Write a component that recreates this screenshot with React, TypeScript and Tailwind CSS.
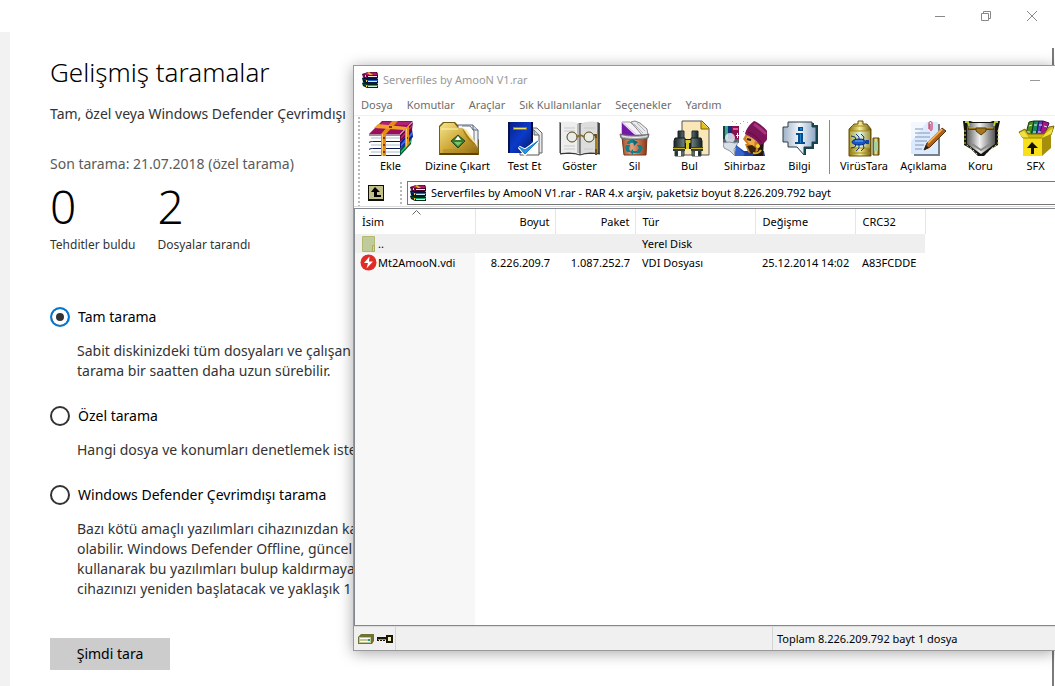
import type { ReactNode } from 'react';

const scanOptions = [
  {
    id: 'full',
    label: 'Tam tarama',
    lines: ['Sabit diskinizdeki tüm dosyaları ve çalışan', 'tarama bir saatten daha uzun sürebilir.'],
  },
  {
    id: 'custom',
    label: 'Özel tarama',
    lines: ['Hangi dosya ve konumları denetlemek istediğinizi'],
  },
  {
    id: 'offline',
    label: 'Windows Defender Çevrimdışı tarama',
    lines: [
      'Bazı kötü amaçlı yazılımları cihazınızdan kaldırmak',
      'olabilir. Windows Defender Offline, güncel',
      'kullanarak bu yazılımları bulup kaldırmaya',
      'cihazınızı yeniden başlatacak ve yaklaşık 1',
    ],
  },
];

const menuItems = ['Dosya', 'Komutlar', 'Araçlar', 'Sık Kullanılanlar', 'Seçenekler', 'Yardım'];

function BooksIcon() {
  return (
    <svg width="17" height="17" viewBox="0 0 17 17" className="shrink-0">
      <path d="M0 11 2 10h12l2 2v4l-11 0-4-2z" fill="#03251a" />
      <path d="m1 12 4 1h11v1H5z" fill="#12a86c" />
      <path d="M6 14h9v1H6z" fill="#c9f5de" />
      <path d="M0 6 2 5h12l2 2v4H4l-3-1z" fill="#03153c" />
      <path d="m1 7 4 1h11v1H5z" fill="#1d62d6" />
      <path d="M6 9h9v1H6z" fill="#cdeaff" />
      <path d="M0 2 6 0l9 0 1 2v4l-11 0-4-1z" fill="#40051f" />
      <path d="m1 2 5-1.500h8l2 2.500-10 .5z" fill="#b5156e" />
      <path d="M6 4h9v1H6z" fill="#fbe0ee" />
      <path d="M1 3l4 1.500V6L1 4.500z" fill="#93105a" />
      <path d="m7 0 4 3h-3L5 1z" fill="#e9b41c" />
      <path d="M3 3h1v2H3zM4 8h1v2H4zM4 13h1v2H4z" fill="#f3cf20" />
    </svg>
  );
}

function IconFrame({ children }: { children: ReactNode }) {
  return (
    <svg width="44" height="37" viewBox="0 0 44 37" className="block">
      {children}
    </svg>
  );
}

function AddIcon() {
  return (
    <IconFrame>
      <path d="M31 29 43 16l-1 8-11 12z" fill="#06563a" />
      <path d="m32 31 10-11v2L32 33z" fill="#20c877" />
      <path d="M31 22 43 9l1 8-13 12z" fill="#0a1f86" />
      <path d="m32 24 11-12v3L32 27z" fill="#3d66ee" />
      <path d="M31 15 44 2l-1 8-12 12z" fill="#6d0840" />
      <path d="m32 17 11-12v2L32 19z" fill="#c02580" />
      <path d="M1 15h30v21H1l1-3-2-3 2-4-2-3 2-4z" fill="#fff" />
      <path d="M2 18h29M2 25h29M2 32h29" stroke="#d7dce4" strokeWidth="2" />
      <path d="M0 15h31" stroke="#5d0637" />
      <path d="M0 22.500c1-1 3-1 5-1h26" fill="none" stroke="#0a1a55" />
      <path d="M0 29.500c1-1 3-1 5-1h26" fill="none" stroke="#0a1a55" />
      <path d="M0 35.500h31" stroke="#07301f" />
      <path d="M13 1h31L31 14H0z" fill="#980d5c" />
      <path d="M14 2h28l-3 3H10z" fill="#b32176" />
      <path d="m23 1 6 0-12 13h-5z" fill="#e58b16" />
      <path d="m9 4 29 3-3 3-30-2z" fill="#f0a02b" />
      <path d="M12 14h5v22h-5zM36 9l4-4v19l-4 5z" fill="#e58b16" />
      <path d="M13 14h1v22h-1zM37 9l1-1v18l-1 1z" fill="#ffc65c" />
      <path d="M14 17h2v2h-2zM14 24h2v2h-2zM14 31h2v2h-2zM20 6h3v2h-3zM38 17h1v2h-1z" fill="#7b3b00" />
    </IconFrame>
  );
}

function ExtractIcon() {
  return (
    <IconFrame>
      <defs>
        <linearGradient id="folder" x1="0" y1="0" x2="1" y2="1">
          <stop offset="0" stopColor="#f4e58c" />
          <stop offset="0.500" stopColor="#cfa93a" />
          <stop offset="1" stopColor="#8f6a10" />
        </linearGradient>
      </defs>
      <path d="M3 6 7 2h12l4 4h8l12 14v15H3z" fill="#7a5c0c" />
      <path d="M22 5h15l5 5v20L22 12z" fill="#eef1f6" stroke="#5b6475" />
      <path d="M26 6h8l4 5v14" fill="#fff" stroke="#6b7486" />
      <path d="M37 5v5h5" fill="#cfd5e0" stroke="#5b6475" />
      <path d="M4 7 8 3h10l4 5h4c3 9 9 15 16 20v6H4z" fill="url(#folder)" />
      <path d="M26 8c3 9 8 15 16 20L32 13z" fill="#a67a12" />
      <path d="M27 8c4 7 8 12 15 18L31 10z" fill="#f7e7a0" />
      <path d="M5 9h17" stroke="#fff3ad" />
      <path d="M4 34h38" stroke="#5c4207" strokeWidth="2" />
      <path d="M7 30h20M7 32h26" stroke="#b08a26" />
      <path d="m22 15 7 6-7 7-7-7z" fill="#397a31" stroke="#244d1e" />
      <path d="m22 16 3 4h-6z" fill="#fff" />
      <path d="m22 26-4-4h8z" fill="#7fc46c" />
    </IconFrame>
  );
}

function TestIcon() {
  return (
    <IconFrame>
      <defs>
        <linearGradient id="testBook" x1="0" y1="0" x2="1" y2="1">
          <stop offset="0" stopColor="#0a1f80" />
          <stop offset="0.500" stopColor="#0b3bcb" />
          <stop offset="1" stopColor="#06155c" />
        </linearGradient>
      </defs>
      <path d="M27 8h7l5 5v20H27z" fill="#e8eaee" stroke="#666" />
      <path d="M20 10h11l5 5v20H17V18z" fill="#fff" stroke="#555" />
      <path d="M31 10v5h5" fill="#ccc" stroke="#666" />
      <path d="M5 2h25v20L19 33H5z" fill="url(#testBook)" />
      <path d="M5 2h2v31H5z" fill="#06124e" />
      <path d="M28 2h2v19h-2z" fill="#020a36" />
      <path d="M10 7h14v3H10z" fill="#8a7c13" />
      <path d="M11 8h12v1H11z" fill="#f2e45c" />
      <path d="m16 27 6 7 13-13-13 9z" fill="#2795e8" stroke="#fff" strokeWidth="3" />
      <path d="m16 27 6 7 13-13-13 9z" fill="#2795e8" stroke="#147cd1" />
    </IconFrame>
  );
}

function ViewIcon() {
  return (
    <IconFrame>
      <path d="M2 3h40v31H2z" fill="#555" />
      <path d="M3 2c7-1 14-1 19 2v31c-5-3-12-3-19-2z" fill="#eee" />
      <path d="M22 4c5-3 12-3 18-2v31c-6-1-13-1-18 2z" fill="#ddd" />
      <path d="M19 4h3v29h-3z" fill="#bbb" />
      <path d="M22 4v31M2 2v31M40 2v31" stroke="#333" />
      <path d="M2 34c8-1 14-1 20 1 6-2 12-2 20-1" fill="none" stroke="#333" />
      <path d="M6 8h11M6 11h11M6 26h11M6 29h11M26 8h11M26 29h9" stroke="#c8c8c8" />
      <circle cx="14" cy="17" r="5" fill="#e9ede8" stroke="#554217" />
      <circle cx="31" cy="17" r="5" fill="#e9ede8" stroke="#554217" />
      <path d="M19 17c2-2 5-2 7 0" fill="none" stroke="#876d23" strokeWidth="2" />
      <path d="M36 15h2v20" fill="none" stroke="#6e5010" strokeWidth="2" />
      <path d="M38 18v11" stroke="#d4ad37" />
    </IconFrame>
  );
}

function DeleteIcon() {
  return (
    <IconFrame>
      <defs>
        <linearGradient id="bin" x1="0" y1="0" x2="1" y2="0">
          <stop offset="0" stopColor="#a4502d" />
          <stop offset="0.400" stopColor="#e5a17e" />
          <stop offset="1" stopColor="#8a3717" />
        </linearGradient>
      </defs>
      <path d="M9 2h8l15 13H9z" fill="#f6f0fa" stroke="#999" />
      <path d="M9 3 23 16H9z" fill="#7318a8" />
      <path d="m9 2 15 13" stroke="#d9b8ee" />
      <path d="m18 2 4-1 5 2 7 6 1 6H29z" fill="#e9eaef" stroke="#888" />
      <path d="m21 4 9 9M24 3l8 8" stroke="#b5b5ba" />
      <path d="M9 17h25l-1 18H11z" fill="url(#bin)" stroke="#793113" />
      <path d="M7 14c5 2 25 2 29 0l-1 4c-5 2-22 2-27 0z" fill="#ababab" stroke="#666" />
      <path d="M9 16c8 2 18 2 25 0" fill="none" stroke="#eee" />
      <path d="M15 24c1-3 5-4 8-1" fill="none" stroke="#147f87" strokeWidth="3" />
      <path d="m20 20 1 6 4-4z" fill="#0d6a72" />
      <path d="m13 25 4 0-1 4 2 3h-4c-2-2-2-5-1-7z" fill="#147f87" />
      <path d="m20 29 0 6-3-3zM20 31h4l2-3-2-3h4l2 3-3 5h-7z" fill="#147f87" />
    </IconFrame>
  );
}

function FindIcon() {
  return (
    <IconFrame>
      <defs>
        <linearGradient id="tube" x1="0" y1="0" x2="1" y2="0">
          <stop offset="0" stopColor="#172326" />
          <stop offset="0.500" stopColor="#8fa1a0" />
          <stop offset="1" stopColor="#142022" />
        </linearGradient>
      </defs>
      <path d="M14 1h20l7 7v27H14z" fill="#f9e7b9" stroke="#555" />
      <path d="M33 1v8h8" fill="#e5c117" stroke="#7d6510" />
      <path d="M15 19h9v10h-9z" fill="#151c1e" />
      <path d="M16 20h7v3h-7zM18 23h3v6h-3z" fill="#d5cb24" />
      <path d="M10 11h6v8h-6zM24 11h6v8h-6z" fill="url(#tube)" stroke="#20282a" />
      <path d="M7 18h10v10H6V21zM23 18h10l1 3v7H23z" fill="url(#tube)" stroke="#151c1e" />
      <path d="M5 27h12v4H5zM23 27h12v4H23z" fill="#303a3c" />
      <path d="M5 28h12v1H5zM23 28h12v1H23z" fill="#c9b41d" />
      <path d="M7 31h9v5H7zM24 31h9v5h-9z" fill="url(#tube)" stroke="#444" />
      <path d="M10 31h3v5h-3zM27 31h3v5h-3z" fill="#fff" />
    </IconFrame>
  );
}

function WizardIcon() {
  return (
    <IconFrame>
      <path d="M0 6h3v15H0z" fill="#14443f" />
      <path d="M2 6h3v15H2z" fill="#3da98b" />
      <path d="M5 6h4v15H5z" fill="#10307a" />
      <path d="M9 6h7v16H9z" fill="#86114f" />
      <path d="M10 8h5v2h-5z" fill="#e35ca0" />
      <path d="M0 19h16v4H0z" fill="#59616b" />
      <circle cx="7" cy="18" r="5" fill="#eef4fa" opacity="0.800" />
      <path d="m0 23 6-1 6 1 3-1-2 5-2 2 1 7-5-5-6-3z" fill="#d9dfe6" stroke="#8e98a4" />
      <path d="m12 36 1-11 8 6 20 0 1 5z" fill="#1c3f9f" />
      <path d="m13 25 9 9-2 2h-8z" fill="#3763cf" />
      <path d="M35 20h6l-1 16H30z" fill="#20180f" />
      <path d="m23 14 13 9-1 8-6 3-4-2-3-8h2l-4-5z" fill="#c98124" />
      <path d="m24 16 8 4-1 6-5-2-3-5z" fill="#efad4c" />
      <path d="m24 19 4 1" stroke="#2e1a08" strokeWidth="2" />
      <path d="m24 26 5-1 4 3-1 6-4 0z" fill="#38220c" />
      <circle cx="35" cy="26" r="2" fill="#f2d32e" />
      <path d="M30 33c4 1 7-1 8-3" fill="none" stroke="#d7ad26" strokeWidth="2" />
      <path d="M31 1c4 1 14 9 15 13-1 5-4 10-9 11-4-5-9-8-15-11 1-5 5-10 9-13z" fill="#7d1457" />
      <path d="M31 4c4 3 9 7 12 10" fill="none" stroke="#a83480" strokeWidth="3" />
      <path d="M25 12c5 2 9 5 13 10" fill="none" stroke="#5d0b40" />
      <path d="M9 1h1v1H9zM17 3h1v1h-1zM20 1h1v1h-1zM20 11h1v1h-1zM13 3h1v1h-1zM24 2h1v1h-1z" fill="#aaa" />
      <path d="M13 15h1v-2h1v2h2v1h-2v2h-1v-2h-1z" fill="#fff" />
    </IconFrame>
  );
}

function InfoIcon() {
  return (
    <IconFrame>
      <defs>
        <linearGradient id="bubble" x1="0" y1="0" x2="1" y2="0">
          <stop offset="0" stopColor="#9fb2c8" />
          <stop offset="0.500" stopColor="#f4f8fc" />
          <stop offset="1" stopColor="#8ba5c2" />
        </linearGradient>
      </defs>
      <path d="M10 2h24v5h4v15h-4v5h-8v8l-7-8h-9v-5H5V7h5z" fill="url(#bubble)" stroke="#2c3e48" />
      <path d="M35 3v3h4v17h-4v5h-8v7" fill="none" stroke="#16444e" strokeWidth="2" />
      <path d="M20 7h5v4h-5zM18 13h7v9h2v2H17v-2h3v-7h-2z" fill="#084c8b" />
      <path d="M22 8h2v2h-2zM22 14h1v9h-1z" fill="#1f85c8" />
    </IconFrame>
  );
}

function VirusIcon() {
  return (
    <IconFrame>
      <defs>
        <linearGradient id="jar" x1="0" y1="0" x2="1" y2="0">
          <stop offset="0" stopColor="#877009" />
          <stop offset="0.500" stopColor="#f7ee9c" />
          <stop offset="1" stopColor="#6a5505" />
        </linearGradient>
        <linearGradient id="glass" x1="0" y1="0" x2="1" y2="0">
          <stop offset="0" stopColor="#b5a940" />
          <stop offset="0.500" stopColor="#dff6ee" />
          <stop offset="1" stopColor="#a3963a" />
        </linearGradient>
      </defs>
      <path d="M16 1h5v3h4l4 5v27H7V9l5-5h4z" fill="url(#jar)" stroke="#695308" />
      <path d="M8 11h20v17H8z" fill="url(#glass)" />
      <path d="M10 6h14M8 11h20M8 28h20M8 33h20" stroke="#a58c12" />
      <path d="M31 18h6v17h-6z" fill="url(#jar)" stroke="#584706" />
      <path d="M32 22h4v9h-4z" fill="#a4cfa2" />
      <path d="m14 14 3 3v4M19 14l3 3-1 4M9 16l4 1 1 3M14 31l3-3v-4M19 31l3-3-1-4M9 28l4-1 1-3" fill="none" stroke="#143b70" />
      <ellipse cx="17" cy="22" rx="7" ry="3" fill="#1759c8" stroke="#092c78" />
      <path d="M24 20h3v4h-3z" fill="#16449e" />
      <path d="M13 21h8" stroke="#70b4ff" />
    </IconFrame>
  );
}

function CommentIcon() {
  return (
    <IconFrame>
      <path d="M10 4h28v32H12z" fill="#77818e" />
      <path d="M9 2h27v32H9z" fill="#dceaff" />
      <path d="M9 2h16L9 22z" fill="#f3f8ff" />
      <path d="M13 9h8M13 13h15M13 17h15M13 21h12M13 25h9M13 29h7" stroke="#8496b3" />
      <path d="M27 9V3c0-2 3-2 3 0v6c0 2-2 2-2 0V4" fill="none" stroke="#c91c46" />
      <path d="m22 30 3-7 15-15 4 3-16 16z" fill="#b35f16" stroke="#50300b" />
      <path d="m26 23 14-14" stroke="#f5b24b" strokeWidth="2" />
      <path d="m22 30 2-5 3 3z" fill="#2e2011" />
    </IconFrame>
  );
}

function ProtectIcon() {
  return (
    <IconFrame>
      <defs>
        <linearGradient id="shield" x1="0" y1="0" x2="1" y2="0">
          <stop offset="0" stopColor="#5c5c5c" />
          <stop offset="0.450" stopColor="#f1f1f1" />
          <stop offset="1" stopColor="#555" />
        </linearGradient>
      </defs>
      <path d="M4 1h7l3 1h17l3-1h7l-2 9v15l-7 4-7 7h-6l-7-7-7-4V10z" fill="#151510" />
      <path d="M10 3h25l1 4v17L22 34 8 24V7z" fill="url(#shield)" />
      <path d="M6 10v14l6 4 7 7M39 10v14l-6 4-7 7" fill="none" stroke="#d8ce55" strokeDasharray="2 2" />
      <path d="M6 2h3l1 4M39 2h-3l-1 4" fill="none" stroke="#b4c934" strokeWidth="2" />
      <path d="M9 9h26" stroke="#5d3d08" strokeWidth="2" />
      <path d="M10 8h24" stroke="#d2a32c" />
      <path d="M17 8h10v3l-5 4-5-4z" fill="#a6771a" stroke="#57400d" />
      <path d="m13 24 9 6 9-6" fill="none" stroke="#8a8a8a" strokeWidth="2" />
    </IconFrame>
  );
}

function SfxIcon() {
  return (
    <IconFrame>
      <path d="m15 2 5-1-3 16h-6z" fill="#4f8c1e" stroke="#123a14" />
      <path d="m20 1 5 0-3 16h-5z" fill="#138a5c" stroke="#093c24" />
      <path d="m25 1 4 0-3 16h-4z" fill="#5a3fc4" stroke="#20145e" />
      <path d="m29 1 6 2-5 14h-5z" fill="#a3188f" stroke="#4b0844" />
      <path d="m15 6 3-1M20 5l3 0M25 5l3 0M30 6l3 1M13 12h3M19 12h3M24 12h3" stroke="#f3e9f3" />
      <path d="m9 18-4-6 6-3 3 5h16l5-7 5-1-3 9-9 6z" fill="#cfb80f" stroke="#7c6b08" />
      <path d="m9 18-4-5 5-2 5 7zM28 18l4-5 7-5-2 7z" fill="#efe044" />
      <path d="m28 18 9-4v14l-9 8z" fill="#a58f0b" />
      <path d="M9 18h19v18H9z" fill="#f7df1a" />
      <path d="M9 18h19" stroke="#9c8709" />
      <path d="m18 22 6 6h-4v6h-3v-6h-4z" fill="#111" />
    </IconFrame>
  );
}

const archiveTools = [
  { label: 'Ekle', icon: <AddIcon /> },
  { label: 'Dizine Çıkart', icon: <ExtractIcon />, wide: true },
  { label: 'Test Et', icon: <TestIcon /> },
  { label: 'Göster', icon: <ViewIcon /> },
  { label: 'Sil', icon: <DeleteIcon /> },
  { label: 'Bul', icon: <FindIcon /> },
  { label: 'Sihirbaz', icon: <WizardIcon /> },
  { label: 'Bilgi', icon: <InfoIcon /> },
];

function ToolButton({ label, icon, width }: { label: string; icon: ReactNode; width: string }) {
  return (
    <button type="button" className={`flex shrink-0 flex-col items-center whitespace-nowrap ${width}`}>
      {icon}
      <span className="leading-[18px]">{label}</span>
    </button>
  );
}

function Grip() {
  return (
    <svg width="3" className="h-full shrink-0" aria-hidden="true">
      <line x1="1" y1="1" x2="1" y2="100%" stroke="#b9b9b9" strokeWidth="2" strokeDasharray="2 2" />
    </svg>
  );
}

function DefenderPage() {
  return (
    <div className="flex min-h-screen flex-col">
      <header className="flex h-8 justify-end text-[#888]">
        <button type="button" aria-label="Simge durumuna küçült" className="grid w-[46px] place-items-center">
          <svg width="10" height="10" stroke="currentColor"><path d="M0 5.500h10" /></svg>
        </button>
        <button type="button" aria-label="Önceki boyut" className="grid w-[46px] place-items-center">
          <svg width="10" height="10" fill="none" stroke="currentColor"><path d="M.5 2.500h7v7h-7zM2.500 2.500v-2h7v7h-2" /></svg>
        </button>
        <button type="button" aria-label="Kapat" className="grid w-[46px] place-items-center">
          <svg width="10" height="10" stroke="currentColor"><path d="m0 0 10 10M10 0 0 10" /></svg>
        </button>
      </header>
      <div className="flex grow">
        <aside className="w-[10px] bg-[#f2f2f2]" />
        <main className="grow whitespace-nowrap pl-10 pt-[22px] text-[14px] leading-5 text-[#333]">
          <h1 className="text-[26px] font-light leading-9 text-black">Gelişmiş taramalar</h1>
          <p className="mt-[14px]">Tam, özel veya Windows Defender Çevrimdışı</p>
          <p className="mt-[30px] text-[#5a5a5a]">Son tarama: 21.07.2018 (özel tarama)</p>
          <dl className="mt-2 flex gap-[22px]">
            <div className="flex flex-col-reverse">
              <dt className="mt-[5px] text-[12px]">Tehditler buldu</dt>
              <dd className="text-[46px] font-light leading-[48px] text-black">0</dd>
            </div>
            <div className="flex flex-col-reverse">
              <dt className="mt-[5px] text-[12px]">Dosyalar tarandı</dt>
              <dd className="text-[46px] font-light leading-[48px] text-black">2</dd>
            </div>
          </dl>
          <form className="mt-[52px]">
            <div className="flex flex-col gap-[25px]">
              {scanOptions.map((option, i) => (
                <div key={option.id}>
                  <div className="flex items-center gap-2 text-black">
                    <input
                      type="radio"
                      name="scan"
                      id={option.id}
                      defaultChecked={i === 0}
                      className="size-5 appearance-none rounded-full border-2 border-[#333] checked:border-[#0078d7] checked:bg-[#333] checked:shadow-[inset_0_0_0_4px_white]"
                    />
                    <label htmlFor={option.id}>{option.label}</label>
                  </div>
                  <p className="mt-[14px] pl-[27px]">
                    {option.lines.map((line) => (
                      <span key={line} className="block">{line}</span>
                    ))}
                  </p>
                </div>
              ))}
            </div>
            <button type="button" className="mt-[39px] h-8 w-[120px] bg-[#ccc] text-black">Şimdi tara</button>
          </form>
        </main>
        <div className="mr-px mt-4 w-0.5 bg-[#7a7a7a]" />
      </div>
    </div>
  );
}

function FileTable() {
  const head = 'border-r border-[#e5e5e5] pl-[7px] pr-[5px] font-normal';
  const cell = 'pl-[7px] pr-[5px]';
  return (
    <table className="h-full w-[570px] table-fixed border-collapse whitespace-nowrap text-left leading-[18px]">
      <colgroup>
        <col className="w-[120px]" />
        <col className="w-20" />
        <col className="w-20" />
        <col className="w-[120px]" />
        <col className="w-[100px]" />
        <col className="w-[70px]" />
      </colgroup>
      <thead>
        <tr className="h-[25px]">
          <th className={`${head} relative`}>
            İsim
            <svg width="9" height="5" viewBox="0 0 9 5" className="absolute left-[57px] top-px" fill="none" stroke="#666">
              <path d="m.5 4.500 4-4 4 4" />
            </svg>
          </th>
          <th className={`${head} text-right`}>Boyut</th>
          <th className={`${head} text-right`}>Paket</th>
          <th className={head}>Tür</th>
          <th className={head}>Değişme</th>
          <th className={head}>CRC32</th>
        </tr>
      </thead>
      <tbody>
        <tr className="h-[19px] bg-[#efefef]">
          <td className="pl-[7px]">
            <span className="flex items-center gap-[3px]">
              <svg width="13" height="16" viewBox="0 0 13 16">
                <path d="M.5.500h12v15H.5z" fill="#bfcb9a" stroke="#b3ba70" />
                <path d="M10.500 9.500h2v6h-2z" fill="#d3d79b" stroke="#a9ad5a" />
              </svg>
              ..
            </span>
          </td>
          <td />
          <td />
          <td className={cell}>Yerel Disk</td>
          <td />
          <td />
        </tr>
        <tr className="h-[19px]">
          <td className="bg-[#f7f7f7] pl-[5px]">
            <span className="flex items-center gap-px">
              <svg width="17" height="17" viewBox="0 0 17 17">
                <circle cx="8.500" cy="8.500" r="8" fill="#df2c26" />
                <path d="M9.500 2.500 4 9h4l-1.500 5.500L13 7.500H9z" fill="#fff" />
              </svg>
              Mt2AmooN.vdi
            </span>
          </td>
          <td className={`${cell} text-right`}>8.226.209.7</td>
          <td className={`${cell} text-right`}>1.087.252.7</td>
          <td className={cell}>VDI Dosyası</td>
          <td className={cell}>25.12.2014 14:02</td>
          <td className={cell}>A83FCDDE</td>
        </tr>
        <tr>
          <td className="bg-[#f7f7f7]" />
          <td colSpan={5} />
        </tr>
      </tbody>
    </table>
  );
}

function ArchiveWindow() {
  return (
    <section className="absolute left-[353px] right-0 top-[65px] flex h-[586px] flex-col overflow-hidden border-y border-l border-[#999] bg-white text-[11px] text-black shadow-[0_2px_14px_rgba(0,0,0,0.35)]">
      <header className="flex h-[29px] shrink-0 items-center gap-1 pl-2 pr-3 text-[#999]">
        <BooksIcon />
        <h2 className="grow">Serverfiles by AmooN V1.rar</h2>
        <button type="button" aria-label="Simge durumuna küçült" className="grid h-full w-4 place-items-center">
          <svg width="10" height="2"><path d="M0 .5h10" stroke="#999" /></svg>
        </button>
      </header>
      <nav className="flex h-[21px] shrink-0 items-center gap-[14px] border-b border-[#f0f0f0] pl-[7px] text-[#6d6d6d]">
        {menuItems.map((item) => (
          <button key={item} type="button" className="whitespace-nowrap">{item}</button>
        ))}
      </nav>
      <div className="flex h-[91px] shrink-0 border-b border-[#dcdcdc] pl-1">
        <Grip />
        <div className="min-w-0 grow">
          <div className="flex h-[62px] pl-[2px] pt-1">
            {archiveTools.map((tool) => (
              <ToolButton key={tool.label} label={tool.label} icon={tool.icon} width={tool.wide ? 'w-[79px]' : 'w-[55px]'} />
            ))}
            <div className="ml-[2px] mr-[3px] h-[54px] w-0.5 shrink-0 border-l border-[#8a8a8a]" />
            <ToolButton label="VirüsTara" icon={<VirusIcon />} width="w-[60px]" />
            <ToolButton label="Açıklama" icon={<CommentIcon />} width="w-[59px]" />
            <ToolButton label="Koru" icon={<ProtectIcon />} width="w-[55px]" />
            <ToolButton label="SFX" icon={<SfxIcon />} width="w-[55px]" />
          </div>
          <div className="flex h-7 pt-[3px]">
            <button type="button" aria-label="Bir üst dizin" className="ml-[7px] mt-1 size-4">
              <svg width="16" height="16" viewBox="0 0 16 16">
                <path d="M0 0h16v16H0z" fill="#0f0e06" />
                <path d="M1 1h14v13H1z" fill="#c3bf88" />
                <path d="m7 2 5 5H9v3h4v2H6V7H3z" fill="#000" />
              </svg>
            </button>
            <div className="ml-[16px]"><Grip /></div>
            <div className="mb-px ml-1 flex grow items-center gap-1 whitespace-nowrap border border-r-0 border-[#777] pl-0.5">
              <BooksIcon />
              <input
                aria-label="Adres"
                readOnly
                value="Serverfiles by AmooN V1.rar - RAR 4.x arşiv, paketsiz boyut 8.226.209.792 bayt"
                className="min-w-0 grow outline-none"
              />
            </div>
          </div>
        </div>
      </div>
      <div className="mt-px min-h-0 grow border-y border-l border-[#828790]">
        <FileTable />
      </div>
      <footer className="flex h-6 shrink-0 border-t border-[#dcdcdc] bg-[#f0f0f0]">
        <div className="flex w-[42px] items-center gap-[3px] border-r border-[#d4d4d4] pl-1">
          <svg width="16" height="10" viewBox="0 0 16 10">
            <path d="M0 3 3 0h13v7l-2 3H0z" fill="#6f7232" />
            <path d="M1 3h12v6H1z" fill="#c2c693" />
            <path d="M2 4h10v1H2zM2 7h10v1H2z" fill="#fff" />
            <path d="M10 5h2v2h-2z" fill="#16a085" />
          </svg>
          <svg width="16" height="8" viewBox="0 0 16 8">
            <path d="M0 2h9V0h7v8H9V5H8v1H6V5H5v1H3V5H2v1H0z" fill="#1a1707" />
            <path d="M11 2h3v4h-3z" fill="#f4f0c4" />
            <path d="M1 4h8v1H1z" fill="#a99b3a" />
          </svg>
        </div>
        <div className="w-[377px] border-r border-[#d4d4d4]" />
        <p className="pl-1 leading-6">Toplam 8.226.209.792 bayt 1 dosya</p>
      </footer>
    </section>
  );
}

export default function App() {
  return (
    <div className="relative min-h-screen overflow-hidden bg-white font-['Noto_Sans','Open_Sans',sans-serif]">
      <DefenderPage />
      <ArchiveWindow />
    </div>
  );
}
